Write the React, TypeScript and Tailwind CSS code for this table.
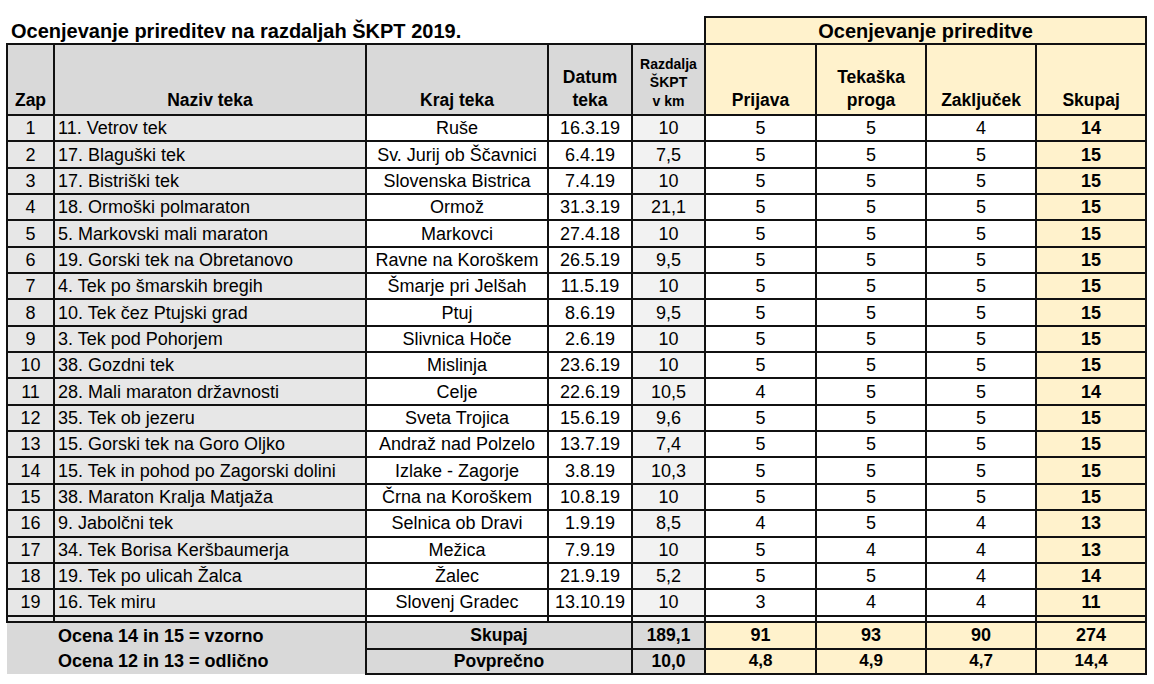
import React from "react";

type Row = [number, string, string, string, string, number, number, number, number];

const rows: Row[] = [
  [1, "11. Vetrov tek", "Ruše", "16.3.19", "10", 5, 5, 4, 14],
  [2, "17. Blaguški tek", "Sv. Jurij ob Ščavnici", "6.4.19", "7,5", 5, 5, 5, 15],
  [3, "17. Bistriški tek", "Slovenska Bistrica", "7.4.19", "10", 5, 5, 5, 15],
  [4, "18. Ormoški polmaraton", "Ormož", "31.3.19", "21,1", 5, 5, 5, 15],
  [5, "5. Markovski mali maraton", "Markovci", "27.4.18", "10", 5, 5, 5, 15],
  [6, "19. Gorski tek na Obretanovo", "Ravne na Koroškem", "26.5.19", "9,5", 5, 5, 5, 15],
  [7, "4. Tek po šmarskih bregih", "Šmarje pri Jelšah", "11.5.19", "10", 5, 5, 5, 15],
  [8, "10. Tek čez Ptujski grad", "Ptuj", "8.6.19", "9,5", 5, 5, 5, 15],
  [9, "3. Tek pod Pohorjem", "Slivnica Hoče", "2.6.19", "10", 5, 5, 5, 15],
  [10, "38. Gozdni tek", "Mislinja", "23.6.19", "10", 5, 5, 5, 15],
  [11, "28. Mali maraton državnosti", "Celje", "22.6.19", "10,5", 4, 5, 5, 14],
  [12, "35. Tek ob jezeru", "Sveta Trojica", "15.6.19", "9,6", 5, 5, 5, 15],
  [13, "15. Gorski tek na Goro Oljko", "Andraž nad Polzelo", "13.7.19", "7,4", 5, 5, 5, 15],
  [14, "15. Tek in pohod po Zagorski dolini", "Izlake - Zagorje", "3.8.19", "10,3", 5, 5, 5, 15],
  [15, "38. Maraton Kralja Matjaža", "Črna na Koroškem", "10.8.19", "10", 5, 5, 5, 15],
  [16, "9. Jabolčni tek", "Selnica ob Dravi", "1.9.19", "8,5", 4, 5, 4, 13],
  [17, "34. Tek Borisa Keršbaumerja", "Mežica", "7.9.19", "10", 5, 4, 4, 13],
  [18, "19. Tek po ulicah Žalca", "Žalec", "21.9.19", "5,2", 5, 5, 4, 14],
  [19, "16. Tek miru", "Slovenj Gradec", "13.10.19", "10", 3, 4, 4, 11],
];

const cell = "border-2 border-[#111] p-0 whitespace-nowrap";
const hdrGray = `${cell} bg-[#d9d9d9] align-bottom text-center font-bold text-[17.5px] leading-[23px] pb-[2px]`;
const hdrYellow = `${cell} bg-[#fff2cc] align-bottom text-center font-bold text-[17.5px] leading-[23px] pb-[2px]`;

export default function App() {
  return (
    <div
      className="w-[1154px] h-[684px] bg-white text-black overflow-hidden"
      style={{ fontFamily: '"Liberation Sans", Arial, sans-serif' }}
    >
      <table className="table-fixed border-collapse ml-[6px] mt-[16px] w-[1141px]">
        <colgroup>
          <col className="w-[47px]" />
          <col className="w-[312px]" />
          <col className="w-[182px]" />
          <col className="w-[84px]" />
          <col className="w-[73px]" />
          <col className="w-[111px]" />
          <col className="w-[110px]" />
          <col className="w-[110px]" />
          <col className="w-[110px]" />
        </colgroup>
        <tbody>
          <tr className="h-[27px]">
            <td colSpan={5} className="p-0 pl-[4px] border-b-2 border-[#111] font-bold text-[20px] leading-[24px] align-bottom whitespace-nowrap">
              Ocenjevanje prireditev na razdaljah ŠKPT 2019.
            </td>
            <td colSpan={4} className={`${cell} bg-[#fff2cc] text-center font-bold text-[20px] leading-[24px]`}>
              Ocenjevanje prireditve
            </td>
          </tr>
          <tr className="h-[71px]">
            <td className={hdrGray}>Zap</td>
            <td className={hdrGray}>Naziv teka</td>
            <td className={hdrGray}>Kraj teka</td>
            <td className={hdrGray}>
              Datum
              <br />
              teka
            </td>
            <td className={`${cell} bg-[#d9d9d9] align-bottom text-center font-bold text-[14px] leading-[18.5px] pb-[4px]`}>
              Razdalja
              <br />
              ŠKPT
              <br />v km
            </td>
            <td className={hdrYellow}>Prijava</td>
            <td className={hdrYellow}>
              Tekaška
              <br />
              proga
            </td>
            <td className={hdrYellow}>Zaključek</td>
            <td className={hdrYellow}>Skupaj</td>
          </tr>
          {rows.map((r) => (
            <tr key={r[0]} className="h-[26.35px] text-[18px] leading-[22px]">
              <td className={`${cell} bg-[#e7e7e7] text-center`}>{r[0]}</td>
              <td className={`${cell} bg-[#e7e7e7] text-left pl-[3px]`}>{r[1]}</td>
              <td className={`${cell} bg-white text-center`}>{r[2]}</td>
              <td className={`${cell} bg-white text-center`}>{r[3]}</td>
              <td className={`${cell} bg-[#f2f2f2] text-center`}>{r[4]}</td>
              <td className={`${cell} bg-white text-center`}>{r[5]}</td>
              <td className={`${cell} bg-white text-center`}>{r[6]}</td>
              <td className={`${cell} bg-white text-center`}>{r[7]}</td>
              <td className={`${cell} bg-[#fff2cc] text-center font-bold`}>{r[8]}</td>
            </tr>
          ))}
          <tr className="h-[6px] text-[0px] leading-[0px]">
            <td className={`${cell} bg-[#e7e7e7]`}></td>
            <td className={`${cell} bg-[#e7e7e7]`}></td>
            <td className={`${cell} bg-white`}></td>
            <td className={`${cell} bg-white`}></td>
            <td className={`${cell} bg-[#f2f2f2]`}></td>
            <td className={`${cell} bg-white`}></td>
            <td className={`${cell} bg-white`}></td>
            <td className={`${cell} bg-white`}></td>
            <td className={`${cell} bg-[#fff2cc]`}></td>
          </tr>
          <tr className="h-[27px] font-bold text-[18px] leading-[22px]">
            <td colSpan={2} className="p-0 pl-[51px] bg-[#d9d9d9] text-left whitespace-nowrap">
              Ocena 14 in 15 = vzorno
            </td>
            <td colSpan={2} className={`${cell} bg-[#d9d9d9] text-center text-[17.5px]`}>Skupaj</td>
            <td className={`${cell} bg-[#d9d9d9] text-center text-[17.5px]`}>189,1</td>
            <td className={`${cell} bg-[#fff2cc] text-center`}>91</td>
            <td className={`${cell} bg-[#fff2cc] text-center`}>93</td>
            <td className={`${cell} bg-[#fff2cc] text-center`}>90</td>
            <td className={`${cell} bg-[#fff2cc] text-center`}>274</td>
          </tr>
          <tr className="h-[25px] font-bold text-[18px] leading-[22px]">
            <td colSpan={2} className="p-0 pl-[51px] bg-[#d9d9d9] text-left whitespace-nowrap">
              Ocena 12 in 13 = odlično
            </td>
            <td colSpan={2} className={`${cell} bg-[#d9d9d9] text-center text-[17.5px]`}>Povprečno</td>
            <td className={`${cell} bg-[#d9d9d9] text-center text-[17.5px]`}>10,0</td>
            <td className={`${cell} bg-[#fff2cc] text-center text-[17px]`}>4,8</td>
            <td className={`${cell} bg-[#fff2cc] text-center text-[17px]`}>4,9</td>
            <td className={`${cell} bg-[#fff2cc] text-center text-[17px]`}>4,7</td>
            <td className={`${cell} bg-[#fff2cc] text-center text-[17px]`}>14,4</td>
          </tr>
        </tbody>
      </table>
    </div>
  );
}
